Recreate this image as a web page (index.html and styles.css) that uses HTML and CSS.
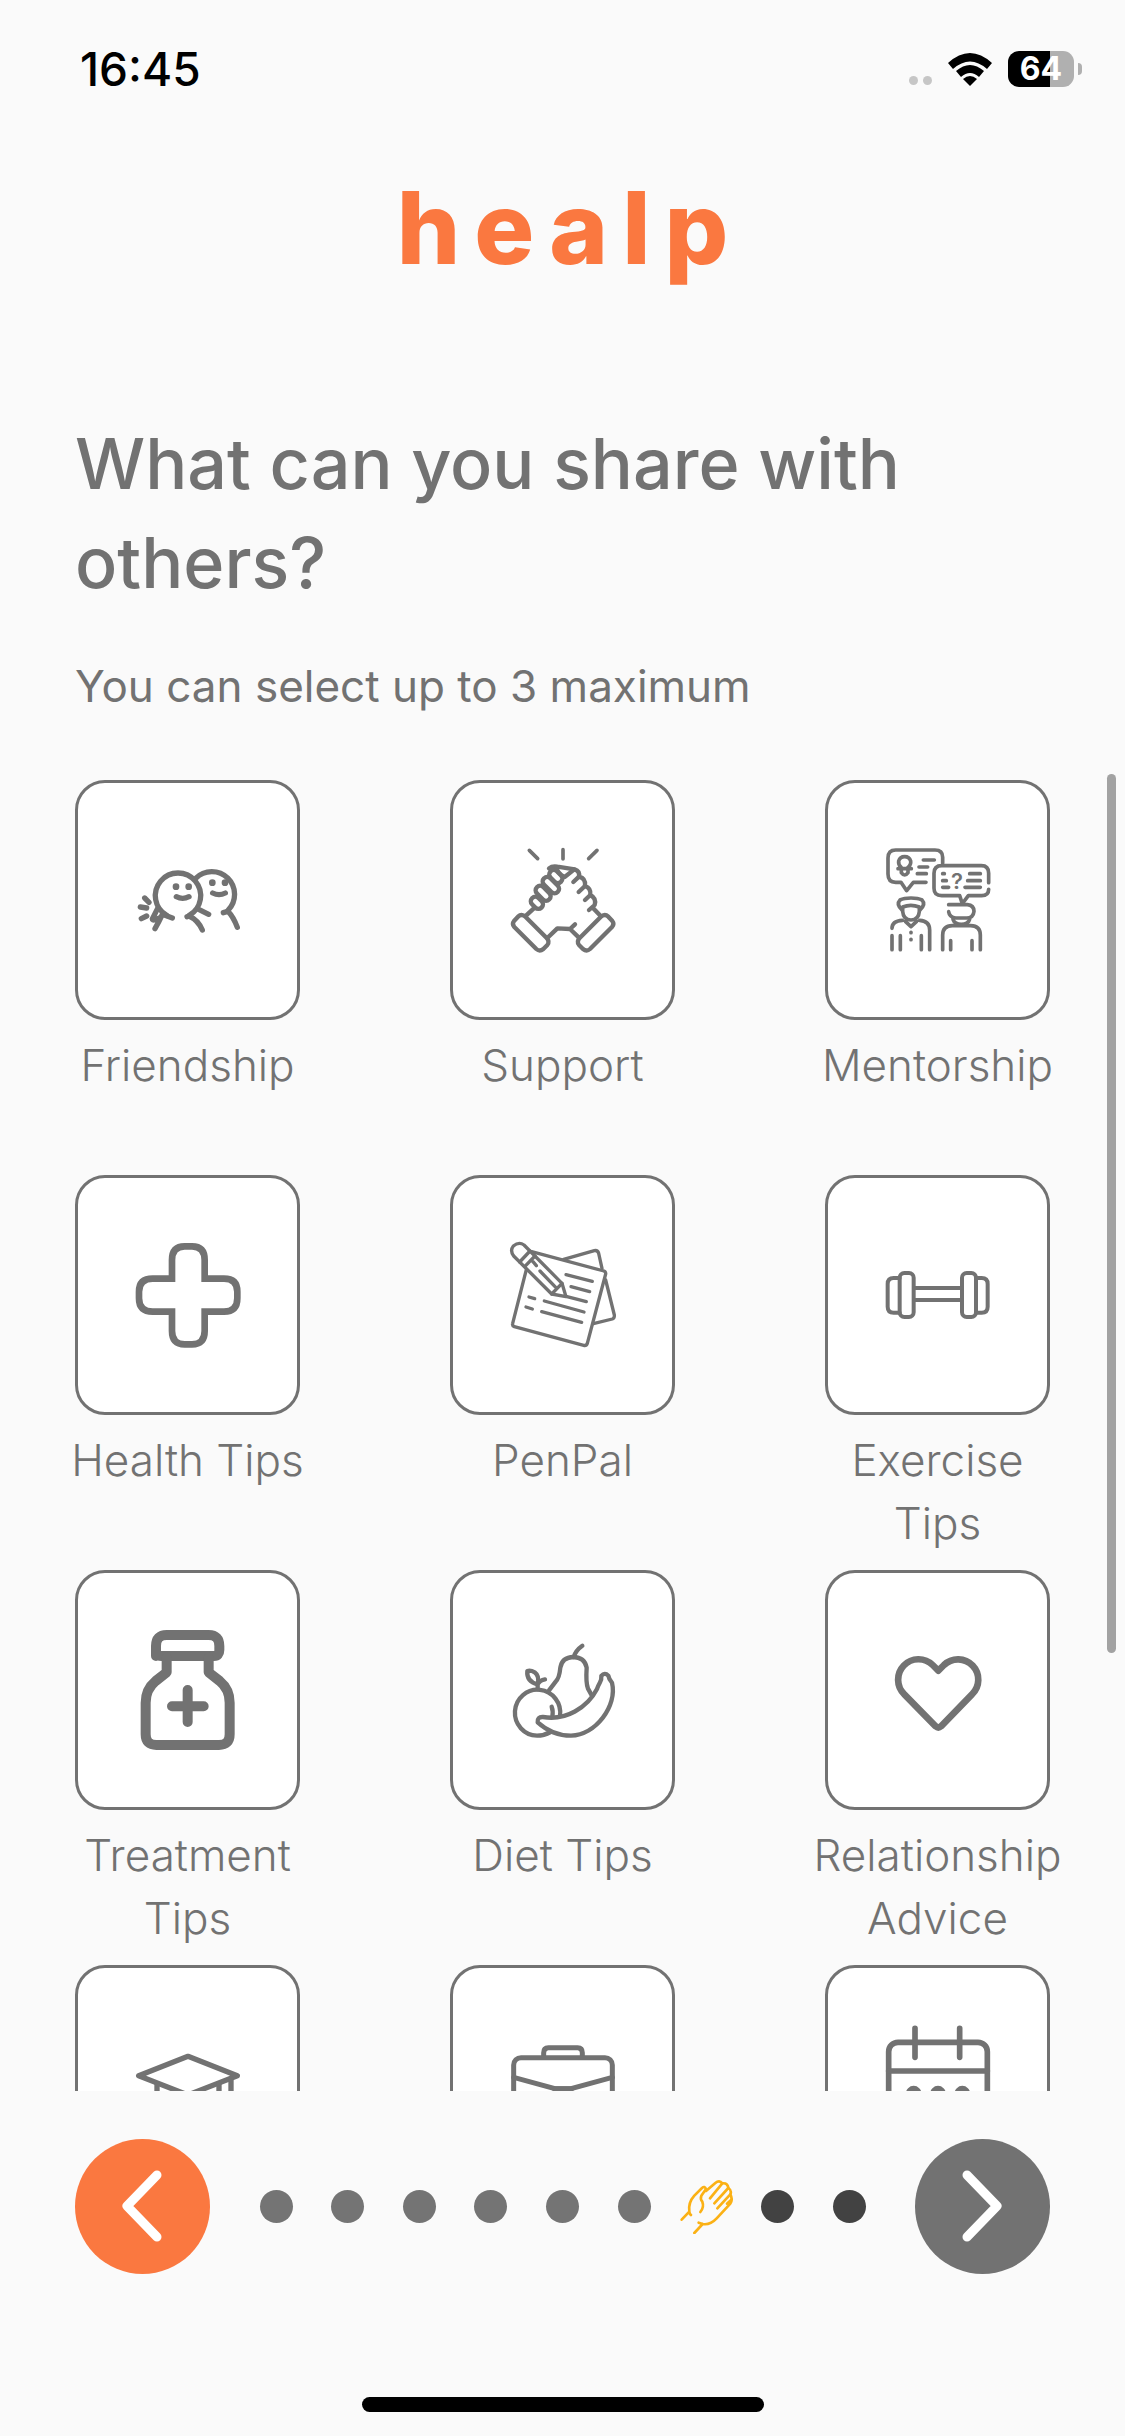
FILE: index.html
```html
<!DOCTYPE html>
<html lang="en">
<head>
  <meta charset="UTF-8">
  <meta name="viewport" content="width=device-width, initial-scale=1.0">
  <title>healp</title>
  <link rel="stylesheet" href="styles.css">
</head>
<body>
  <div class="status">
    <span class="time">16:45</span>
    <div class="status-right">
      <span class="signal"><i></i><i></i></span>
      <svg class="wifi" viewBox="0 0 44 33">
        <path d="M0 10 Q22 -10 44 10 L39 16 Q22 1 5 16Z"/>
        <path d="M8 18 Q22 6 36 18 L31 24 Q22 16 13 24Z"/>
        <path d="M15 26 Q22 20 29 26 L22 33Z"/>
      </svg>
      <span class="battery"><b>64</b></span>
    </div>
  </div>

  <h1 class="logo">healp</h1>

  <div class="intro">
    <h2>What can you share with others?</h2>
    <p>You can select up to 3 maximum</p>
  </div>

  <main class="list">
    <div class="grid">
      <button type="button" class="item">
        <span class="box">
          <svg class="icon" viewBox="202 210 360 360" stroke-width="16">
            <path d="M318 436 A68 68 0 1 1 386 436"/>
            <path d="M405 325 A68 68 0 1 1 502 421"/>
            <path d="M347 380 Q366 390 385 380 M456 369 Q475 379 494 369"/>
            <path d="M425 480 Q412 450 385 438 L379 440 M414 418 L444 433 M530 472 Q518 440 502 424 L488 428"/>
            <path d="M335 444 L305 433 Q295 455 283 476 M291 415 L275 447 Q275 455 300 442"/>
            <path d="M252 384 L265 397 M239 411 L258 414 M242 446 L258 438"/>
            <g class="solid"><circle cx="346" cy="350" r="10"/><circle cx="384" cy="350" r="10"/><circle cx="455" cy="338" r="10"/><circle cx="493" cy="338" r="10"/></g>
          </svg>
        </span>
        <span class="label">Friendship</span>
      </button>

      <button type="button" class="item">
        <span class="box">
          <svg class="icon" viewBox="187 210 360 360" stroke-width="13">
            <path d="M266 241 L291 266 M367 239 V267 M469 241 L444 266" stroke-width="11"/>
            <path d="M232 440 L220 453 Q213 462 221 471 L287 537 Q297 546 308 537 L320 525 Q328 515 318 504 L255 441 Q243 430 232 440Z"/>
            <path d="M503 440 L515 453 Q522 462 514 471 L448 537 Q438 546 427 537 L415 525 Q407 515 417 504 L480 441 Q492 430 503 440Z"/>
            <path d="M256 437 L282 413 M320 504 L350 475 L388 477 L414 502 M388 477 L403 463 M480 438 L457 414"/>
            <path d="M325 295 Q335 287 350 290 L402 298 Q418 303 415 320 Q436 325 433 348 Q452 355 449 375 Q468 385 462 405 L445 420"/>
            <path d="M415 320 L398 336 M433 348 L414 366 M449 375 L433 390"/>
            <g class="fill">
              <rect x="323" y="306" width="44" height="27" rx="13" transform="rotate(45 345 320)"/>
              <rect x="302" y="332" width="58" height="27" rx="13" transform="rotate(45 331 345)"/>
              <rect x="281" y="356" width="52" height="27" rx="13" transform="rotate(45 307 370)"/>
              <rect x="269" y="385" width="40" height="27" rx="13" transform="rotate(45 289 398)"/>
            </g>
            <path d="M347 292 Q350 310 372 321 L400 299"/>
          </svg>
        </span>
        <span class="label">Support</span>
      </button>

      <button type="button" class="item">
        <span class="box">
          <svg class="icon" viewBox="232 210 360 360" stroke-width="11">
            <path d="M376 337 H338 L318 362 L301 337 H285 Q262 337 262 312 V264 Q262 240 285 240 H403 Q426 240 426 262 V280"/>
            <path d="M564 338 V310 Q564 287 542 287 H423 Q400 287 400 310 V355 Q400 377 423 377 H477 L485 401 L503 377 H543 Q564 377 564 358"/>
            <path d="M303 294 Q292 285 294 273 Q298 260 312 260 Q326 260 330 273 Q332 285 320 294 M292 296 H332 M302 298 V308 Q312 322 322 308 V298"/>
            <path d="M368 270 H401 M355 291 H381 M350 311 H377"/>
            <path d="M426 311 H431 M507 311 H539 M426 332 H437 M501 332 H539 M426 352 H444 M493 352 H539"/>
            <path d="M304 420 Q286 403 298 390 Q310 384 331 384 Q352 384 364 390 Q376 403 358 420"/>
            <path d="M306 411 Q330 401 356 411 V424 Q354 450 331 450 Q308 450 306 424Z"/>
            <path d="M314 454 L331 470 L348 454 M274 475 Q274 453 305 451 M357 451 Q387 453 387 480 V539"/>
            <path d="M274 497 V539 M299 497 V539 M362 497 V539 M331 487 V488 M331 508 V509"/>
            <path d="M444 404 H500 Q520 406 520 424 Q518 444 498 444 H465 Q446 441 444 425"/>
            <path d="M457 448 Q462 463 482 463 Q503 463 507 448"/>
            <path d="M426 539 V495 Q426 468 455 467 H510 Q539 468 539 495 V539 M450 512 V539 M514 512 V539"/>
            <text class="mark" x="469" y="356" text-anchor="middle">?</text>
          </svg>
        </span>
        <span class="label">Mentorship</span>
      </button>

      <button type="button" class="item">
        <span class="box">
          <svg class="icon" viewBox="202 225 360 360" stroke-width="20">
            <path d="M334 356 V300 Q334 259 372 259 H394 Q432 259 432 300 V356 H490 Q530 356 530 395 V415 Q530 455 490 455 H432 V513 Q432 553 394 553 H372 Q334 553 334 513 V455 H276 Q235 455 235 415 V395 Q235 356 276 356Z" stroke-linejoin="miter"/>
          </svg>
        </span>
        <span class="label">Health Tips</span>
      </button>

      <button type="button" class="item">
        <span class="box">
          <svg class="icon" viewBox="202 225 360 360" stroke-width="10">
            <path d="M384 298 L476 272 Q486 270 489 280 L499 325 M510 360 L536 465 Q537 474 530 477 L473 491"/>
            <path d="M288 275 L505 333 Q511 336 510 342 L455 550 Q452 558 444 556 L236 500 Q229 497 231 490 L273 325"/>
            <path class="fill" d="M234 288 Q222 272 233 258 Q250 244 265 255 L379 370 L391 410 L348 402Z"/>
            <path d="M252 306 L283 273 M267 320 L298 288 M379 370 L348 402 M292 305 L302 317 M313 333 L358 380"/>
            <path d="M391 344 L470 364 M406 380 L462 395 M394 410 L452 425 M326 423 L445 456 M318 455 L438 487 M280 411 L297 416 M271 441 L290 447"/>
          </svg>
        </span>
        <span class="label">PenPal</span>
      </button>

      <button type="button" class="item">
        <span class="box">
          <svg class="icon" viewBox="232 225 360 360" stroke-width="12">
            <rect x="297" y="339" width="42" height="132" rx="14"/>
            <rect x="484" y="339" width="42" height="132" rx="14"/>
            <path d="M297 354 H279 Q261 354 261 372 V440 Q261 458 279 458 H297 M526 354 H543 Q561 354 561 372 V440 Q561 458 543 458 H526"/>
            <path d="M342 384 H482 M342 420 H482"/>
          </svg>
        </span>
        <span class="label">Exercise Tips</span>
      </button>

      <button type="button" class="item">
        <span class="box">
          <svg class="icon" viewBox="202 207 360 360" stroke-width="30">
            <path d="M286 285 V255 Q286 222 318 222 H444 Q476 222 476 255 V267 Q476 285 460 285 H302 Q286 285 286 267"/>
            <path d="M318 290 V334 L285 360 Q255 385 255 425 V520 Q255 552 287 552 H475 Q507 552 507 520 V425 Q507 385 477 360 L444 334 V290"/>
            <path d="M381 387 V483 M334 436 H429"/>
          </svg>
        </span>
        <span class="label">Treatment Tips</span>
      </button>

      <button type="button" class="item">
        <span class="box">
          <svg class="icon" viewBox="202 207 360 360" stroke-width="13">
            <path d="M440 254 Q420 268 414 288"/>
            <path d="M340 388 L360 362 Q371 352 374 320 Q379 289 413 288 Q447 289 453 320 Q450 365 457 383 L467 401"/>
            <path d="M345 513 Q325 524 304 524 A68 69 0 1 1 373 465"/>
            <path d="M348 437 Q353 450 350 468"/>
            <path d="M306 385 V370 Q272 362 275 330 Q285 327 297 334 Q312 345 306 370 Q312 358 328 355"/>
            <path class="fill" d="M306 484 C335 510 365 524 406 524 C480 522 546 435 529 365 Q520 356 518 344 Q507 333 497 345 C499 362 492 360 484 384 C455 440 390 480 322 468 Q304 467 306 484Z"/>
          </svg>
        </span>
        <span class="label">Diet Tips</span>
      </button>

      <button type="button" class="item">
        <span class="box">
          <svg class="icon" viewBox="232 207 360 360" stroke-width="20">
            <path d="M413 329 L396 312 A60 60 0 0 0 311 400 L405 496 Q413 503 421 496 L514 400 A60 60 0 0 0 430 312Z"/>
          </svg>
        </span>
        <span class="label">Relationship Advice</span>
      </button>

      <button type="button" class="item" aria-label="Education">
        <span class="box">
          <svg class="icon" viewBox="202 222 360 360" stroke-width="16">
            <path d="M382 316 L530 374 L382 432 L234 374Z"/>
            <path d="M289 398 V470 Q382 515 475 470 V398 M511 384 V480"/>
          </svg>
        </span>
      </button>

      <button type="button" class="item" aria-label="Career">
        <span class="box">
          <svg class="icon" viewBox="202 222 360 360" stroke-width="15">
            <path d="M324 316 V305 Q324 290 338 290 H426 Q440 290 440 305 V316"/>
            <rect x="234" y="320" width="296" height="210" rx="22"/>
            <path d="M234 379 L358 413 H406 L530 379"/>
            <rect x="358" y="413" width="48" height="30"/>
          </svg>
        </span>
      </button>

      <button type="button" class="item" aria-label="Events">
        <span class="box">
          <svg class="icon" viewBox="202 222 360 360" stroke-width="17">
            <rect x="234" y="274" width="296" height="270" rx="28"/>
            <path d="M234 360 H530 M313 232 V319 M447 232 V319"/>
            <circle cx="309" cy="428" r="15"/>
            <circle cx="382" cy="428" r="15"/>
            <circle cx="455" cy="428" r="15"/>
          </svg>
        </span>
      </button>
    </div>
    <span class="scroll-thumb"></span>
  </main>

  <nav class="pager">
    <button type="button" class="round back" aria-label="Back">
      <svg viewBox="0 0 135 135"><path d="M82 36 L52 67 L82 98"/></svg>
    </button>
    <ol class="steps">
      <li class="done"></li>
      <li class="done"></li>
      <li class="done"></li>
      <li class="done"></li>
      <li class="done"></li>
      <li class="done"></li>
      <li class="current">
        <svg class="hand" viewBox="57 87 162 162">
          <path d="M65 206 L88 182 Q89 190 93 192 M88 182 Q84 155 103 134 L126 111 Q134 104 138 114 L124 134 Q120 144 127 152 Q133 168 121 183"/>
          <path d="M138 120 L166 96 Q178 86 187 97 Q203 95 205 111 Q216 118 211 130 Q219 145 211 158 L170 202 Q150 223 128 219 L116 215 M128 219 L103 246"/>
          <path d="M187 97 L150 142 M205 111 L163 157 M211 130 L172 172 M213 147 L201 158"/>
        </svg>
      </li>
      <li></li>
      <li></li>
    </ol>
    <button type="button" class="round next" aria-label="Next">
      <svg viewBox="0 0 135 135"><path d="M52 36 L82 67 L52 98"/></svg>
    </button>
  </nav>

  <div class="home-bar"></div>
</body>
</html>
```
FILE: styles.css
```css
* { box-sizing: border-box; }
body {
  margin: 0;
  height: 100vh;
  display: flex;
  flex-direction: column;
  background: #fafafa;
  color: #727272;
  font-family: Inter, sans-serif;
  overflow: hidden;
}
h1, h2, p, ol { margin: 0; padding: 0; }
button {
  border: none;
  padding: 0;
  background: none;
  color: inherit;
  font: inherit;
  cursor: pointer;
}

/* status bar */
.status {
  height: 138px;
  flex: none;
  display: flex;
  align-items: center;
  justify-content: space-between;
  padding: 0 43px 0 80px;
  color: #000;
}
.time { font-size: 46px; font-weight: 500; }
.status-right { display: flex; align-items: center; gap: 16px; }
.signal { display: flex; gap: 5px; align-self: flex-end; padding-bottom: 2px; }
.signal i {
  width: 9px;
  height: 9px;
  border-radius: 50%;
  background: #c6c6c6;
}
.wifi { width: 44px; height: 33px; }
.battery {
  position: relative;
  width: 66px;
  height: 36px;
  margin-right: 8px;
  border-radius: 11px;
  background: linear-gradient(90deg, #000 64%, #b0b0b0 64%);
  color: #fff;
  text-align: center;
}
.battery b { font-size: 32px; line-height: 36px; }
.battery::after {
  content: "";
  position: absolute;
  right: -8px;
  top: 12px;
  width: 4px;
  height: 12px;
  border-radius: 0 4px 4px 0;
  background: #b0b0b0;
}

/* header */
.logo {
  margin-top: 30px;
  padding-left: 14px;
  color: #fa7840;
  font-size: 100px;
  font-weight: 800;
  line-height: 120px;
  letter-spacing: 14px;
  text-align: center;
}
.intro { padding: 126px 75px 50px; }
.intro h2 { font-size: 70px; font-weight: 500; line-height: 99px; }
.intro p { margin-top: 43px; font-size: 44px; line-height: 63px; }

/* options */
.list {
  position: relative;
  flex: 1;
  min-height: 0;
  padding: 12px 62px 0;
  overflow: hidden;
}
.grid {
  display: grid;
  grid-template-columns: repeat(3, 251px);
  grid-auto-rows: 380px;
  row-gap: 15px;
  justify-content: space-between;
}
.item {
  display: flex;
  flex-direction: column;
  align-items: center;
  gap: 14px;
}
.box {
  width: 225px;
  height: 240px;
  flex: none;
  display: flex;
  align-items: center;
  justify-content: center;
  border: 3px solid #727272;
  border-radius: 30px;
  background: #fff;
}
.label { font-size: 44px; font-weight: 300; line-height: 63px; }
.icon {
  width: 120px;
  height: 120px;
  fill: none;
  stroke: #727272;
  stroke-linecap: round;
  stroke-linejoin: round;
}
.icon .solid { fill: #727272; stroke: none; }
.icon .fill { fill: #fff; }
.icon .mark { fill: #727272; stroke: none; font-size: 66px; font-weight: 600; }
.scroll-thumb {
  position: absolute;
  top: 6px;
  right: 9px;
  width: 9px;
  height: 879px;
  border-radius: 5px;
  background: #a2a2a2;
}

/* bottom navigation */
.pager {
  display: flex;
  align-items: center;
  padding: 48px 75px 0;
}
.round {
  width: 135px;
  height: 135px;
  flex: none;
  border-radius: 50%;
  background: #727272;
}
.back { background: #fa7840; }
.round svg {
  display: block;
  fill: none;
  stroke: #fff;
  stroke-width: 9;
  stroke-linecap: round;
  stroke-linejoin: round;
}
.steps {
  flex: 1;
  display: flex;
  justify-content: space-between;
  margin: 0 39px;
  list-style: none;
}
.steps li {
  width: 54px;
  height: 54px;
  display: flex;
  align-items: center;
  justify-content: center;
}
.steps li::before {
  content: "";
  width: 33px;
  height: 33px;
  border-radius: 50%;
  background: #424242;
}
.steps .done::before { background: #747474; }
.steps .current::before { display: none; }
.hand {
  width: 54px;
  height: 54px;
  fill: none;
  stroke: #fbb115;
  stroke-width: 8;
  stroke-linecap: round;
  stroke-linejoin: round;
}
.home-bar {
  width: 402px;
  height: 15px;
  flex: none;
  margin: 123px auto 24px;
  border-radius: 8px;
  background: #000;
}
```
